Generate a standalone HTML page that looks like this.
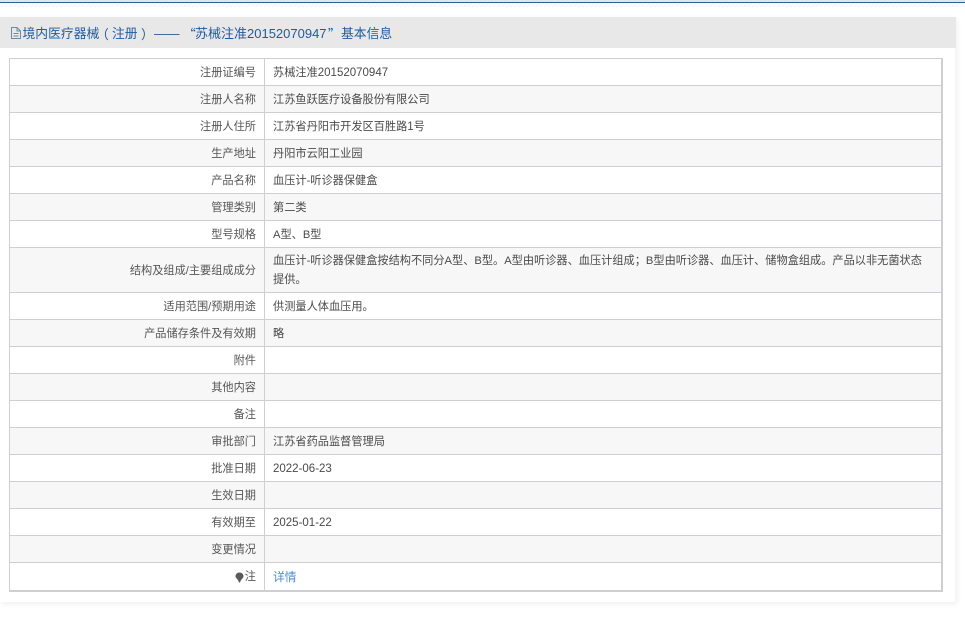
<!DOCTYPE html>
<html lang="zh">
<head>
<meta charset="utf-8">
<style>
html,body{margin:0;padding:0;background:#fff;width:965px;height:618px;overflow:hidden;font-family:"Liberation Sans","Noto Sans CJK SC",sans-serif;}
#hatch{position:absolute;left:0;top:3px;width:965px;height:4px;background:repeating-linear-gradient(135deg,#f0f3f7 0 1px,#fbfcfd 1px 3px);}
#line0{position:absolute;left:0;top:0;width:965px;height:2px;background:#dde6ef;}
#line{position:absolute;left:0;top:2px;width:965px;height:1px;background:#2b5f9e;}
#panel{position:absolute;left:0;top:17px;width:955px;height:585px;background:#fff;box-shadow:2px 2px 6px rgba(0,0,0,.07);}
#head{position:absolute;left:0;top:0;width:956px;height:31px;background:#e8e8e8;}
#head span{position:absolute;top:0;line-height:33px;font-size:12.8px;color:#1e5a9e;white-space:nowrap;}
#head span.q{font-family:"Noto Sans CJK SC",sans-serif;}
#icon{position:absolute;left:11px;top:10px;}
#t{position:absolute;left:9px;top:58px;width:934px;height:534px;}
.r{position:absolute;left:0;width:934px;}
.r.g{background:#f7f7f8;}
.hl{position:absolute;left:0;width:934px;height:1px;background:#cfcfd3;}
.vl{position:absolute;top:0;height:534px;width:1px;background:#cfcfd3;}
.k,.v{position:absolute;top:1px;bottom:-1px;display:flex;align-items:center;font-size:11.2px;line-height:16px;color:#4a4a4a;}
.k{left:0;width:247px;justify-content:flex-end;color:#555;}
.v{left:264px;width:654px;display:block;}
.v.c{display:flex;}
.n{font-size:11.5px;}
a{color:#4a8ad4;text-decoration:none;font-size:11.8px;}
svg.b{margin-right:1px;}
</style>
</head>
<body>
<div id="line0"></div>
<div id="line"></div>
<div id="hatch"></div>
<div id="panel">
<div id="head">
<svg id="icon" width="10" height="12" viewBox="0 0 10 12"><path d="M.5 .5H6L9.500 4V11.500H.5ZM6 .5V4H9.500M2.500 6.500H7.500M2.500 9H7.500" fill="none" stroke="#7388a6" stroke-width="1"/></svg>
<span style="left:22.500px">境内医疗器械</span>
<span class="q" style="left:96px">（</span>
<span style="left:112px">注册</span>
<span class="q" style="left:141px">）</span>
<span style="left:154px">——</span>
<span class="q" style="left:183px">“</span>
<span style="left:195px;font-size:13px">苏械注准20152070947</span>
<span class="q" style="left:328px">”</span>
<span style="left:341px">基本信息</span>
</div>
</div>
<div id="t">
<div class="r" style="top:1px;height:26px"><div class="k">注册证编号</div><div class="v c">苏械注准<span class="n">20152070947</span></div></div>
<div class="r g" style="top:28px;height:26px"><div class="k">注册人名称</div><div class="v c">江苏鱼跃医疗设备股份有限公司</div></div>
<div class="r" style="top:55px;height:26px"><div class="k">注册人住所</div><div class="v c">江苏省丹阳市开发区百胜路<span class="n">1</span>号</div></div>
<div class="r g" style="top:82px;height:26px"><div class="k">生产地址</div><div class="v c">丹阳市云阳工业园</div></div>
<div class="r" style="top:109px;height:26px"><div class="k">产品名称</div><div class="v c">血压计-听诊器保健盒</div></div>
<div class="r g" style="top:136px;height:26px"><div class="k">管理类别</div><div class="v c">第二类</div></div>
<div class="r" style="top:163px;height:26px"><div class="k">型号规格</div><div class="v c">A型、B型</div></div>
<div class="r g" style="top:190px;height:44px"><div class="k">结构及组成/主要组成成分</div><div class="v" style="top:3.500px;line-height:19px">血压计-听诊器保健盒按结构不同分A型、B型。A型由听诊器、血压计组成；B型由听诊器、血压计、储物盒组成。产品以非无菌状态提供。</div></div>
<div class="r" style="top:235px;height:26px"><div class="k">适用范围/预期用途</div><div class="v c">供测量人体血压用。</div></div>
<div class="r g" style="top:262px;height:26px"><div class="k">产品储存条件及有效期</div><div class="v c">略</div></div>
<div class="r" style="top:289px;height:26px"><div class="k">附件</div></div>
<div class="r g" style="top:316px;height:26px"><div class="k">其他内容</div></div>
<div class="r" style="top:343px;height:26px"><div class="k">备注</div></div>
<div class="r g" style="top:370px;height:26px"><div class="k">审批部门</div><div class="v c">江苏省药品监督管理局</div></div>
<div class="r" style="top:397px;height:26px"><div class="k">批准日期</div><div class="v c"><span class="n">2022-06-23</span></div></div>
<div class="r g" style="top:424px;height:26px"><div class="k">生效日期</div></div>
<div class="r" style="top:451px;height:26px"><div class="k">有效期至</div><div class="v c"><span class="n">2025-01-22</span></div></div>
<div class="r g" style="top:478px;height:26px"><div class="k">变更情况</div></div>
<div class="r" style="top:505px;height:28px"><div class="k" style="top:0;bottom:0"><svg class="b" width="9" height="11" viewBox="0 0 9 11"><path d="M4.500 .5C2.200 .5 .5 2.200 .5 4.300C.5 6.300 3 7 4 10.500H5C6 7 8.500 6.300 8.500 4.300C8.500 2.200 6.800 .5 4.500 .5Z" fill="#5a5a5a"/></svg>注</div><div class="v c" style="top:0;bottom:0"><a>详情</a></div></div>
<div class="hl" style="top:0"></div><div class="hl" style="top:27px"></div><div class="hl" style="top:54px"></div><div class="hl" style="top:81px"></div><div class="hl" style="top:108px"></div><div class="hl" style="top:135px"></div><div class="hl" style="top:162px"></div><div class="hl" style="top:189px"></div><div class="hl" style="top:234px"></div><div class="hl" style="top:261px"></div><div class="hl" style="top:288px"></div><div class="hl" style="top:315px"></div><div class="hl" style="top:342px"></div><div class="hl" style="top:369px"></div><div class="hl" style="top:396px"></div><div class="hl" style="top:423px"></div><div class="hl" style="top:450px"></div><div class="hl" style="top:477px"></div><div class="hl" style="top:504px"></div><div class="hl" style="top:532px;height:2px"></div>
<div class="vl" style="left:0"></div><div class="vl" style="left:255px"></div><div class="vl" style="left:932px;width:2px"></div>
</div>
</body>
</html>
